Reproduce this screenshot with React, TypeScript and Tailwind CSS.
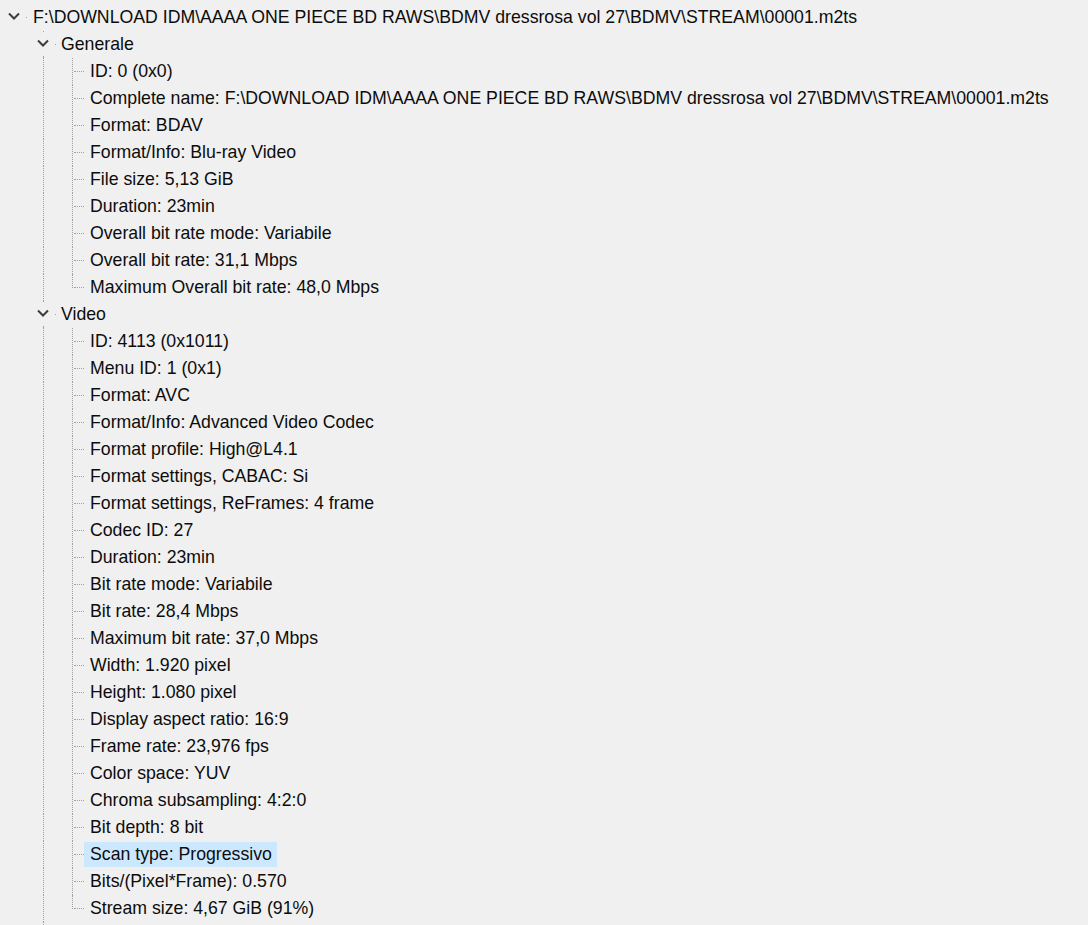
type Row = {
  text: string;
  depth: 0 | 1 | 2;
  expander?: boolean;
  last?: boolean;
  selected?: boolean;
};

const PATH =
  "F:\\DOWNLOAD IDM\\AAAA ONE PIECE BD RAWS\\BDMV dressrosa vol 27\\BDMV\\STREAM\\00001.m2ts";

const generale = [
  "ID: 0 (0x0)",
  `Complete name: ${PATH}`,
  "Format: BDAV",
  "Format/Info: Blu-ray Video",
  "File size: 5,13 GiB",
  "Duration: 23min",
  "Overall bit rate mode: Variabile",
  "Overall bit rate: 31,1 Mbps",
  "Maximum Overall bit rate: 48,0 Mbps",
];

const video = [
  "ID: 4113 (0x1011)",
  "Menu ID: 1 (0x1)",
  "Format: AVC",
  "Format/Info: Advanced Video Codec",
  "Format profile: High@L4.1",
  "Format settings, CABAC: Si",
  "Format settings, ReFrames: 4 frame",
  "Codec ID: 27",
  "Duration: 23min",
  "Bit rate mode: Variabile",
  "Bit rate: 28,4 Mbps",
  "Maximum bit rate: 37,0 Mbps",
  "Width: 1.920 pixel",
  "Height: 1.080 pixel",
  "Display aspect ratio: 16:9",
  "Frame rate: 23,976 fps",
  "Color space: YUV",
  "Chroma subsampling: 4:2:0",
  "Bit depth: 8 bit",
  "Scan type: Progressivo",
  "Bits/(Pixel*Frame): 0.570",
  "Stream size: 4,67 GiB (91%)",
];

const rows: Row[] = [
  { text: PATH, depth: 0, expander: true },
  { text: "Generale", depth: 1, expander: true },
  ...generale.map((t, i) => ({
    text: t,
    depth: 2 as const,
    last: i === generale.length - 1,
  })),
  { text: "Video", depth: 1, expander: true },
  ...video.map((t, i) => ({
    text: t,
    depth: 2 as const,
    last: i === video.length - 1,
    selected: t.startsWith("Scan type"),
  })),
];

// dotted tree line, the Win32 TreeView kind
const vline = "border-l border-dotted border-[#a0a0a0]";

function Chevron() {
  return (
    <svg width="12" height="8" viewBox="0 0 12 8" className="block">
      <polyline
        points="1,1.5 6,6.5 11,1.5"
        fill="none"
        stroke="#3c3c3c"
        strokeWidth="2"
      />
    </svg>
  );
}

function Guide({ line }: { line: boolean }) {
  return (
    <div className="h-full w-[29px] shrink-0 pl-[14px]">
      {line && <div className={`h-full ${vline}`} />}
    </div>
  );
}

function Expander({ line }: { line: boolean }) {
  return (
    <div className="flex h-full w-[26px] shrink-0 flex-col items-center">
      <div className={`ml-[2px] h-px ${line ? vline : ""}`} />
      <div className="flex h-[24px] items-center pb-[3px] pl-px">
        <Chevron />
      </div>
      <div className={`ml-[2px] flex-1 ${line ? vline : ""}`} />
    </div>
  );
}

function Connector({ last }: { last?: boolean }) {
  return (
    <div className="flex h-full w-[26px] shrink-0 pl-[14px]">
      <div className={`${last ? "h-[14px]" : "h-full"} ${vline}`} />
      <div className="ml-px w-[11px] self-center border-t border-dotted border-[#a0a0a0]" />
    </div>
  );
}

function TreeRow({ row }: { row: Row }) {
  const guides = [];
  for (let i = 0; i < row.depth; i++) {
    guides.push(<Guide key={i} line={i === 1} />);
  }

  return (
    <div className="flex h-[27px] items-center">
      {guides}
      {row.expander ? <Expander line={row.depth === 1} /> : <Connector last={row.last} />}
      {row.expander && (
        <span
          className={`h-px w-px shrink-0 bg-[#a0a0a0] ${
            row.depth === 0 ? "mr-[6px]" : "mr-[5px]"
          }`}
        />
      )}
      <div
        className={`flex h-[25px] items-center whitespace-nowrap pr-[5px] ${
          row.expander ? "" : "pl-[6px]"
        } ${row.selected ? "bg-[#cce8ff]" : ""}`}
      >
        {row.text}
      </div>
    </div>
  );
}

export default function App() {
  return (
    <div
      className="h-[925px] w-[1088px] overflow-hidden bg-[#f0f0f0] pt-[4px] text-[17.7px] text-[#0c0c0c]"
      style={{ fontFamily: '"Liberation Sans", Arial, sans-serif' }}
    >
      {rows.map((row, i) => (
        <TreeRow key={i} row={row} />
      ))}
      <div className="flex h-[27px]">
        <Guide line={false} />
        <Guide line={true} />
      </div>
    </div>
  );
}
